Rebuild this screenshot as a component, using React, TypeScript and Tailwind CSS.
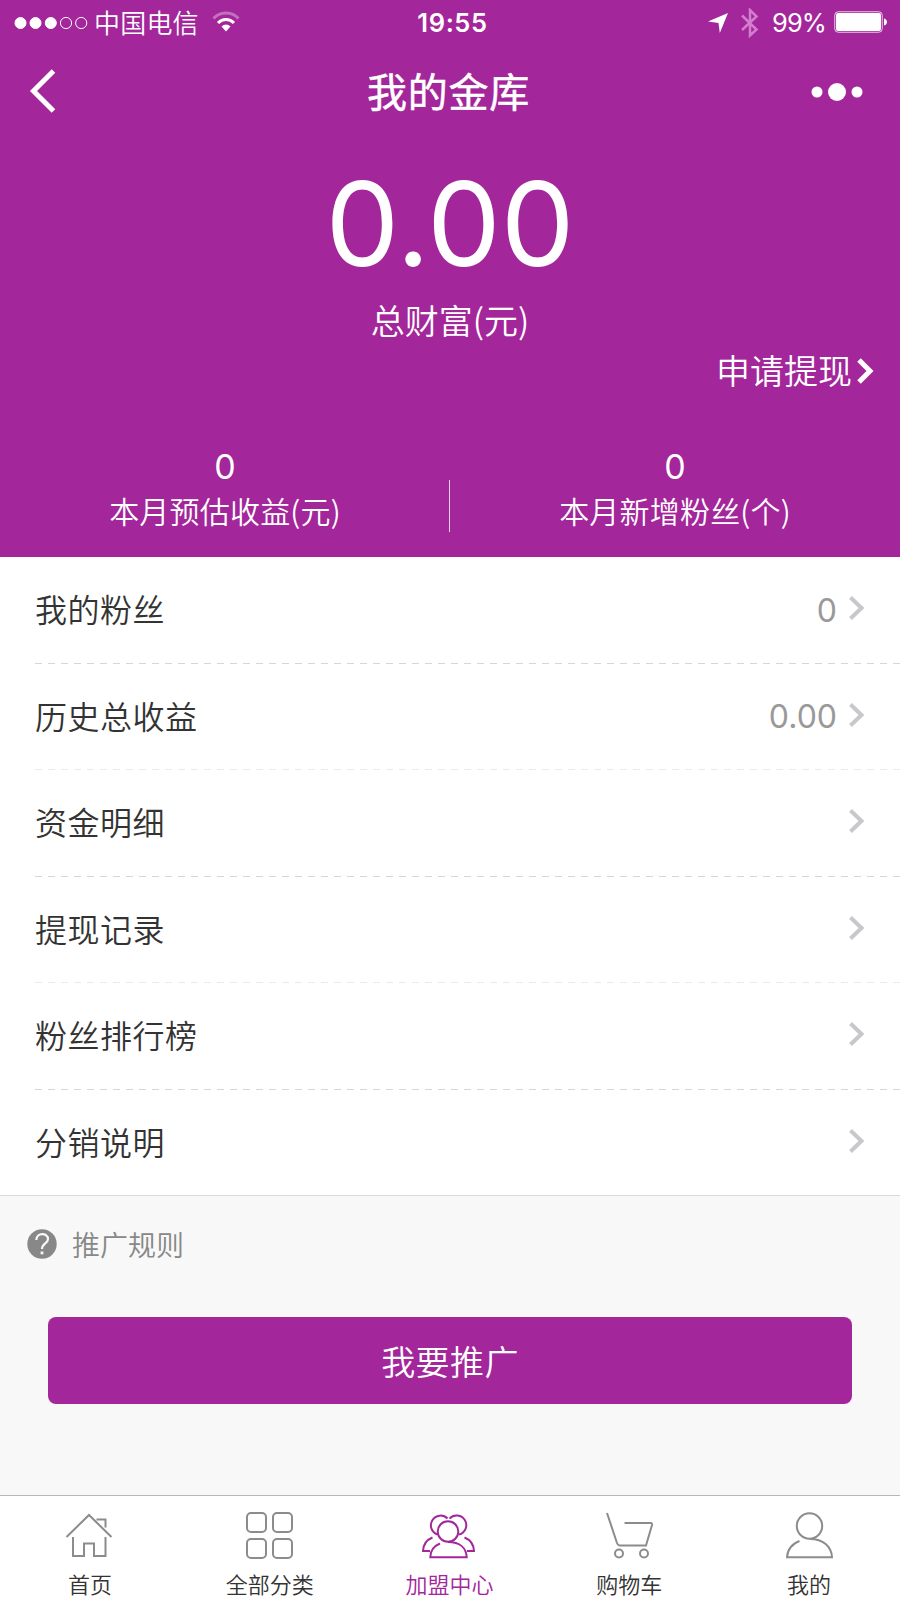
import type { ReactNode } from 'react';

interface MenuItem {
  label: string;
  value?: string;
  divider: string;
}

interface TabItem {
  label: string;
  active?: boolean;
  icon: ReactNode;
}

const menuItems: MenuItem[] = [
  { label: '我的粉丝', value: '0', divider: 'text-[#d6d6d6]' },
  { label: '历史总收益', value: '0.00', divider: 'text-[#ebebeb]' },
  { label: '资金明细', divider: 'text-[#d6d6d6]' },
  { label: '提现记录', divider: 'text-[#ebebeb]' },
  { label: '粉丝排行榜', divider: 'text-[#d6d6d6]' },
  { label: '分销说明', divider: '' },
];

const tabItems: TabItem[] = [
  {
    label: '首页',
    icon: (
      <>
        <path d="M2.5 25 25 3 47.5 25" />
        <path d="M32.5 7.5h9v8" />
        <path d="M9 25v19h11V31.500h10V44h11.500V25" />
      </>
    ),
  },
  {
    label: '全部分类',
    icon: (
      <>
        <rect x="3" y="1" width="19" height="19" rx="4" />
        <rect x="29" y="1" width="19" height="19" rx="4" />
        <rect x="3" y="27" width="19" height="19" rx="4" />
        <rect x="29" y="27" width="19" height="19" rx="4" />
      </>
    ),
  },
  {
    label: '加盟中心',
    active: true,
    icon: (
      <>
        <circle cx="25" cy="19.500" r="10.300" />
        <path d="M14.500 22.500A9.700 9.700 0 1 1 24.500 6.500" />
        <path d="M36 22.500A9.700 9.700 0 1 0 26.500 6.500" />
        <path d="M17 31.500C11 34 7.300 39 7.300 45.300h36.400C43.300 36 37 30 25 30" />
        <path d="M9.500 25.500C4.500 27.500.3 32 0 39h7" />
        <path d="M41.500 25.500c5 2 9.200 6.500 9.500 13.500h-7" />
      </>
    ),
  },
  {
    label: '购物车',
    icon: (
      <>
        <path d="M3 1 13 31q1 2.500 3 2.500h26l6-20.500q.5-2-1.500-2H20.500" />
        <circle cx="15" cy="41.500" r="4" />
        <circle cx="40" cy="41.500" r="4" />
      </>
    ),
  },
  {
    label: '我的',
    icon: (
      <>
        <circle cx="25.500" cy="14" r="12.700" />
        <path d="M15.500 29C8 31.500 3.300 38 3 45.300h45C47.500 34.500 39 27 26 27" />
      </>
    ),
  },
];

function StatusBar() {
  return (
    <div className="flex h-[46px] items-center justify-between pl-[14px] pr-3">
      <div className="flex w-[400px] items-center">
        <svg className="-mt-px" width="74" height="14" viewBox="0 0 74 14" fill="#fff" stroke="#fff">
          <circle cx="6.500" cy="7" r="5.500" />
          <circle cx="21.500" cy="7" r="5.500" />
          <circle cx="36.800" cy="7" r="5.500" />
          <circle cx="52" cy="7" r="5.600" fill="none" />
          <circle cx="67.200" cy="7" r="5.600" fill="none" />
        </svg>
        <span className="ml-[6px] pb-[2px] text-[26px] font-[350] leading-[40px] tracking-[0.200px]">中国电信</span>
        <svg className="-mt-[3px] ml-[13px]" width="28" height="22" viewBox="0 0 28 22" fill="none" stroke="#fff" strokeWidth="3">
          <path d="M1.500 7.500C8 0 20 0 26.500 7.500" strokeOpacity=".35" />
          <path d="M6 12c4.500-4.800 11.500-4.800 16 0" />
          <path d="M9.500 15.500c2.500-2.700 6.500-2.700 9 0L14 20.500z" fill="#fff" stroke="none" />
        </svg>
      </div>
      <span className="ml-[3px] font-['Inter',sans-serif] text-[25.500px] font-semibold leading-[40px] tracking-[0.600px]">
        19:55
      </span>
      <div className="flex w-[400px] items-center justify-end">
        <svg width="20" height="20" viewBox="0 0 20 20" fill="#fff">
          <path d="M20 0 11.800 20 10.500 10 0 8.500z" />
        </svg>
        <svg className="-mt-px ml-[13px]" width="18" height="30" viewBox="0 0 18 30" fill="none" stroke="#d27dcd" strokeWidth="2.500">
          <path d="M1 7.500 15.500 21.500 9 27.500V2l6.500 6.500L1 22" />
        </svg>
        <span className="ml-[13px] font-['Inter',sans-serif] text-[25.500px] font-normal leading-[40px] tracking-[-0.900px]">
          99%
        </span>
        <svg className="-mt-[2px] ml-[8px]" width="54" height="22" viewBox="0 0 54 22">
          <rect x=".75" y=".75" width="47.500" height="20.500" rx="3.500" fill="none" stroke="#fff" strokeOpacity=".75" />
          <rect x="2" y="2" width="45" height="18" rx="2" fill="#fff" />
          <path d="M50 7.500c4 1 4 6 0 7z" fill="#fff" />
        </svg>
      </div>
    </div>
  );
}

function NavBar() {
  return (
    <div className="flex h-[92px] items-center justify-between pl-[29px] pr-[37px]">
      <svg className="-mt-[2px]" width="70" height="44" viewBox="0 0 70 44" fill="none" stroke="#fff" strokeWidth="5">
        <path d="M24.500 2 4.500 22l20 20" />
      </svg>
      <h1 className="-ml-[3px] pb-[4px] text-[40px] font-normal leading-[56px] tracking-[0.800px] [-webkit-text-stroke:0.5px_white]">
        我的金库
      </h1>
      <svg className="-mt-px" width="62" height="20" viewBox="0 0 62 20" fill="#fff">
        <circle cx="16" cy="10" r="5.500" />
        <circle cx="36" cy="10" r="9" />
        <circle cx="56" cy="10" r="5.500" />
      </svg>
    </div>
  );
}

function Stat({ value, label }: { value: string; label: string }) {
  return (
    <div className="flex flex-1 flex-col items-center">
      <span className="font-['Inter',sans-serif] text-[34px] font-normal leading-[40px]">{value}</span>
      <span className="mt-px text-[30px] font-[350] leading-[44px] tracking-[0.200px]">{label}</span>
    </div>
  );
}

function MenuRow({ item }: { item: MenuItem }) {
  return (
    <div className="flex h-[106.500px] flex-col pl-[35px]">
      <div className="flex flex-1 items-center pr-[35px]">
        <span className="flex-1 pb-[3px] text-[32px] font-[350] leading-[48px] tracking-[0.500px]">{item.label}</span>
        {item.value && (
          <span className="mr-[12px] pt-[2px] font-['Inter',sans-serif] text-[32px] font-normal leading-[48px] text-[#999]">
            {item.value}
          </span>
        )}
        <svg className="-mt-[3px]" width="16" height="26" viewBox="0 0 16 26" fill="none" stroke="#c7c7cc" strokeWidth="4">
          <path d="m1.500 2.500 11 10.500-11 10.500" />
        </svg>
      </div>
      {item.divider && (
        <div
          className={`h-px bg-[repeating-linear-gradient(90deg,currentColor_0_7px,transparent_7px_13px)] ${item.divider}`}
        />
      )}
    </div>
  );
}

export default function App() {
  return (
    <div className="flex h-[1600px] w-[900px] flex-col overflow-hidden bg-[#f8f8f8] font-['Noto_Sans_CJK_SC',sans-serif] text-[#333]">
      <header className="flex h-[557px] flex-col bg-[#a3269b] text-white">
        <StatusBar />
        <NavBar />
        <div className="mt-[25px] text-center font-['Inter',sans-serif] text-[117px] leading-[122px]">0.00</div>
        <div className="mt-[11px] text-center text-[34px] font-[350] leading-[48px]">总财富(元)</div>
        <div className="mt-[2px] flex items-center justify-end pr-[26px]">
          <span className="text-[34px] font-[350] leading-[48px]">申请提现</span>
          <svg className="ml-[5px] mt-[2px]" width="17" height="26" viewBox="0 0 17 26" fill="none" stroke="#fff" strokeWidth="5">
            <path d="m2 2 11 11L2 24" />
          </svg>
        </div>
        <div className="mt-[53px] flex">
          <Stat value="0" label="本月预估收益(元)" />
          <div className="-ml-px mt-[33px] h-[52px] w-px bg-white/80" />
          <Stat value="0" label="本月新增粉丝(个)" />
        </div>
      </header>

      <section className="h-[639px] border-b border-[#d9d9d9] bg-white">
        {menuItems.map((item) => (
          <MenuRow key={item.label} item={item} />
        ))}
      </section>

      <main className="flex flex-1 flex-col px-[48px]">
        <div className="-ml-[21px] mt-[26px] flex items-center text-[#888]">
          <svg width="30" height="30" viewBox="0 0 30 30">
            <circle cx="15" cy="15" r="14.700" fill="#888" />
            <path
              d="M9.300 11C9.500 3 21 3.500 21 10c0 4.500-6 4.500-6 10"
              fill="none"
              stroke="#f8f8f8"
              strokeWidth="2.200"
            />
            <rect x="13.600" y="22.500" width="2.800" height="2.800" fill="#f8f8f8" />
          </svg>
          <span className="ml-[15px] text-[28px] font-[350] leading-[44px]">推广规则</span>
        </div>
        <button className="mt-[51px] h-[87px] rounded-lg bg-[#a3269b] text-[34px] font-[350] leading-[48px] tracking-[0.400px] text-white">
          我要推广
        </button>
      </main>

      <nav className="flex h-[105px] border-t border-[#b8b8b8] bg-white pr-px">
        {tabItems.map((tab) => (
          <div key={tab.label} className="flex flex-1 flex-col items-center pt-[16px]">
            <svg
              className={`overflow-visible ${tab.active ? '-ml-[2px] text-[#a3269b]' : 'text-[#8c8c8c]'}`}
              width="51"
              height="48"
              viewBox="0 0 51 48"
              fill="none"
              stroke="currentColor"
              strokeWidth="2"
            >
              {tab.icon}
            </svg>
            <span className={`mt-[7px] text-[22px] font-[350] leading-[32px] ${tab.active ? 'text-[#a3269b]' : ''}`}>
              {tab.label}
            </span>
          </div>
        ))}
      </nav>
    </div>
  );
}
